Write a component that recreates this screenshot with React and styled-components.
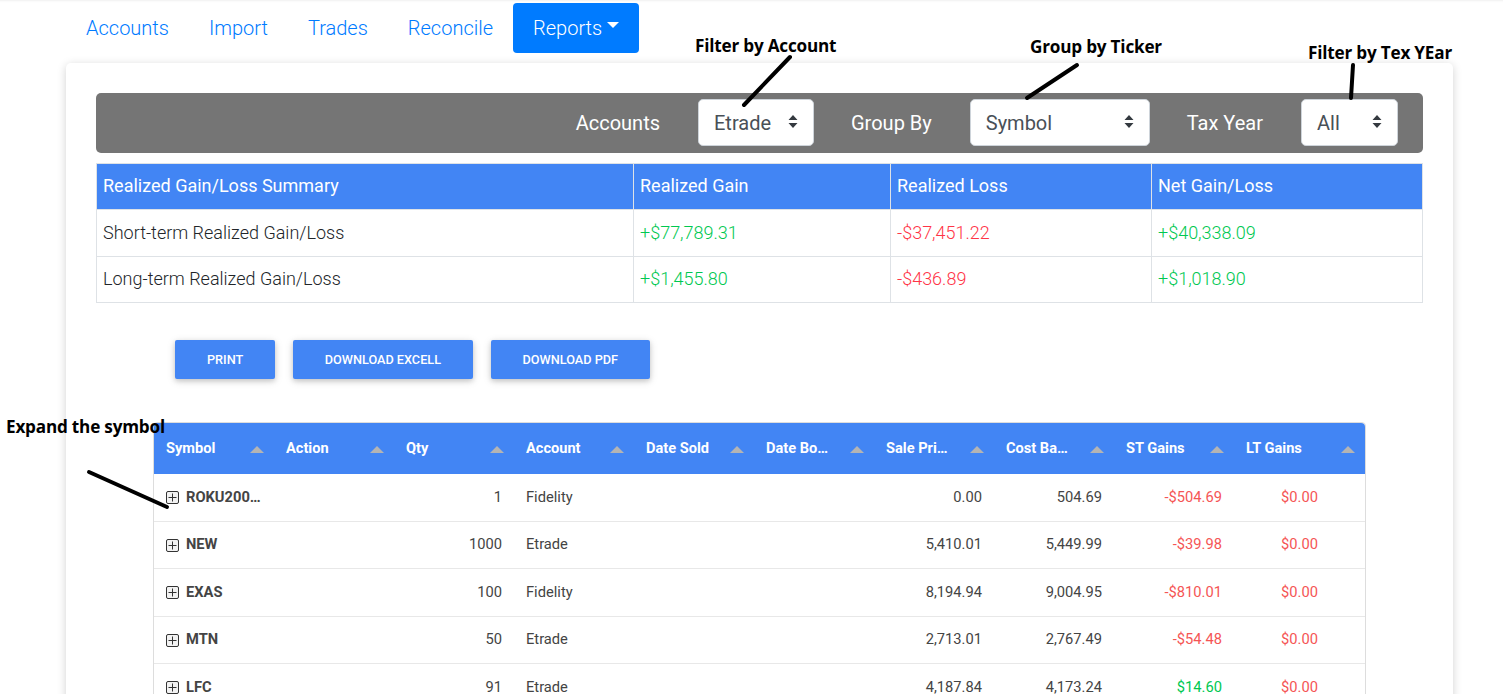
import React from "react";
import styled, { createGlobalStyle } from "styled-components";

const Global = createGlobalStyle`
  html, body { margin: 0; padding: 0; background: #fff; }
  body { font-family: Roboto, "Liberation Sans", sans-serif; color: #212529; }
`;

const Page = styled.div`
  position: relative;
  height: 694px;
  overflow: hidden;
  padding-top: 3px;
  box-sizing: border-box;
  box-shadow: inset 0 3px 3px -3px rgba(0,0,0,.12);
`;

const Nav = styled.nav`
  display: flex;
  height: 50px;
  margin-left: 66px;
`;

const NavLink = styled.a`
  display: flex;
  align-items: center;
  padding: 0 20px;
  font-size: 20px;
  font-weight: 300;
  border-radius: 4px;
  color: ${p => (p.$active ? "#fff" : "#007bff")};
  background: ${p => (p.$active ? "#007bff" : "transparent")};
`;

const Caret = styled.span`
  display: inline-block;
  margin-left: 5px;
  margin-bottom: 6px;
  border-top: 6px solid #fff;
  border-left: 6px solid transparent;
  border-right: 6px solid transparent;
`;

const Card = styled.main`
  margin: 10px 50px 0 66px;
  padding: 30px;
  min-height: 700px;
  background: #fff;
  border-radius: 5px;
  box-shadow: 0 2px 10px rgba(0,0,0,.18);
`;

const FilterBar = styled.div`
  display: flex;
  align-items: center;
  justify-content: flex-end;
  height: 60px;
  padding-right: 25px;
  background: #757575;
  border-radius: 5px;
`;

const FilterLabel = styled.label`
  margin: 0 38px 0 37px;
  font-size: 20px;
  color: #fff;
`;

const SelectWrap = styled.div`
  position: relative;
  width: ${p => p.$w}px;
  height: 47px;
  margin-bottom: 1px;
`;

const Select = styled.select`
  appearance: none;
  width: 100%;
  height: 100%;
  padding: 0 15px;
  border: 1px solid #ced4da;
  border-radius: 5px;
  background: #fff;
  font: 400 20px Roboto, sans-serif;
  color: #495057;
`;

const SelectIcon = styled.svg`
  position: absolute;
  right: 16px;
  top: 15px;
  width: 10px;
  height: 15px;
  pointer-events: none;
`;

const Summary = styled.table`
  width: 1326px;
  margin-top: 10px;
  border-collapse: collapse;
  table-layout: fixed;
  font-size: 18px;
  font-weight: 300;
`;

const SumHead = styled.th`
  height: 46px;
  padding: 0 6px 2px;
  box-sizing: border-box;
  background: #4285f4;
  border: 1px solid #dee2e6;
  color: #fff;
  font-weight: 400;
  text-align: left;
  width: ${p => p.$w}px;
`;

const SumCell = styled.td`
  height: 46.5px;
  padding: 0 6px 1px;
  box-sizing: border-box;
  border: 1px solid #dee2e6;
  color: ${p => p.$color || "#212529"};
`;

const Actions = styled.div`
  display: flex;
  gap: 17.5px;
  margin: 37px 0 0 79px;
`;

const ActionButton = styled.button`
  height: 39px;
  padding: 0 32px;
  border: 0;
  border-radius: 2px;
  background: #4285f4;
  color: #fff;
  font: 500 12.7px Roboto, sans-serif;
  text-transform: uppercase;
  box-shadow: 0 2px 5px rgba(0,0,0,.16), 0 2px 10px rgba(0,0,0,.12);
`;

const Grid = styled.section`
  width: 1213px;
  margin: 43px 0 0 57px;
  box-sizing: border-box;
  border: 1px solid #ddd;
  border-radius: 4px 4px 0 0;
`;

const GridHead = styled.div`
  display: grid;
  grid-template-columns: repeat(9, 120px) 1fr;
  height: 51px;
  background: #4285f4;
  border-radius: 4px 4px 0 0;
`;

const HeadCell = styled.div`
  display: flex;
  align-items: center;
  justify-content: space-between;
  padding: 0 10px 2px 12px;
`;

const HeadLabel = styled.span`
  width: 66px;
  overflow: hidden;
  white-space: nowrap;
  text-overflow: ellipsis;
  font-size: 14.6px;
  font-weight: 700;
  color: #fff;
`;

const SortArrow = styled.span`
  margin-top: 4px;
  border-bottom: 7px solid #b4b4b4;
  border-left: 7.5px solid transparent;
  border-right: 7.5px solid transparent;
`;

const GridRow = styled.div`
  display: grid;
  grid-template-columns: repeat(9, 120px) 1fr;
  align-items: center;
  height: 47.5px;
  padding-bottom: 1px;
  box-sizing: border-box;
  border-bottom: 1px solid #e8e8e8;
  font-size: 14.7px;
  color: #444;
`;

const SymbolCell = styled.div`
  display: flex;
  align-items: center;
  gap: 7px;
  padding-left: 12px;
  min-width: 0;
`;

const Expand = styled.svg`
  flex: none;
  width: 13px;
  height: 13px;
  margin-top: 2px;
`;

const SymbolName = styled.span`
  width: 76px;
  overflow: hidden;
  white-space: nowrap;
  text-overflow: ellipsis;
  font-weight: 700;
  color: #444;
`;

const Cell = styled.div`
  padding: 0 12px;
  text-align: ${p => (p.$right ? "right" : "left")};
  color: ${p => p.$color || "inherit"};
  ${p => p.$last && "padding-right: 47px;"}
`;

const Note = styled.div`
  position: absolute;
  left: ${p => p.$x}px;
  top: ${p => p.$y}px;
  font-family: "Open Sans", sans-serif;
  font-size: 17.15px;
  font-weight: 700;
  color: #000;
  white-space: nowrap;
  letter-spacing: -0.2px;
`;

const Strokes = styled.svg`
  position: absolute;
  left: 0;
  top: 0;
  width: 1503px;
  height: 694px;
  pointer-events: none;
`;

const RED = "#ff3547";
const GREEN = "#00c851";
const GRID_RED = "#f55555";
const GRID_GREEN = "#00c851";

const heads = ["Symbol", "Action", "Qty", "Account", "Date Sold", "Date Bought", "Sale Price", "Cost Basis", "ST Gains", "LT Gains"];

const rows = [
  ["ROKU200117C00120000", "1", "Fidelity", "0.00", "504.69", "-$504.69", GRID_RED],
  ["NEW", "1000", "Etrade", "5,410.01", "5,449.99", "-$39.98", GRID_RED],
  ["EXAS", "100", "Fidelity", "8,194.94", "9,004.95", "-$810.01", GRID_RED],
  ["MTN", "50", "Etrade", "2,713.01", "2,767.49", "-$54.48", GRID_RED],
  ["LFC", "91", "Etrade", "4,187.84", "4,173.24", "$14.60", GRID_GREEN],
];

const summary = [
  ["Short-term Realized Gain/Loss", "+$77,789.31", "-$37,451.22", "+$40,338.09"],
  ["Long-term Realized Gain/Loss", "+$1,455.80", "-$436.89", "+$1,018.90"],
];

const FilterSelect = ({ w, value, options }) => (
  <SelectWrap $w={w}>
    <Select defaultValue={value}>
      {options.map(o => <option key={o}>{o}</option>)}
    </Select>
    <SelectIcon viewBox="0 0 10 15">
      <path d="M5 1 9.5 6H.5zM5 14 .5 9h9z" fill="#343a40" />
    </SelectIcon>
  </SelectWrap>
);

export default function App() {
  return (
    <Page>
      <Global />
      <Nav>
        <NavLink>Accounts</NavLink>
        <NavLink>Import</NavLink>
        <NavLink>Trades</NavLink>
        <NavLink>Reconcile</NavLink>
        <NavLink $active>Reports<Caret /></NavLink>
      </Nav>
      <Card>
        <FilterBar>
          <FilterLabel>Accounts</FilterLabel>
          <FilterSelect w={116} value="Etrade" options={["Etrade", "Fidelity"]} />
          <FilterLabel>Group By</FilterLabel>
          <FilterSelect w={180} value="Symbol" options={["Symbol", "Account"]} />
          <FilterLabel>Tax Year</FilterLabel>
          <FilterSelect w={97} value="All" options={["All", "2019"]} />
        </FilterBar>
        <Summary>
          <thead>
            <tr>
              <SumHead $w={537}>Realized Gain/Loss Summary</SumHead>
              <SumHead $w={257}>Realized Gain</SumHead>
              <SumHead $w={261}>Realized Loss</SumHead>
              <SumHead $w={271}>Net Gain/Loss</SumHead>
            </tr>
          </thead>
          <tbody>
            {summary.map(r => (
              <tr key={r[0]}>
                <SumCell>{r[0]}</SumCell>
                <SumCell $color={GREEN}>{r[1]}</SumCell>
                <SumCell $color={RED}>{r[2]}</SumCell>
                <SumCell $color={GREEN}>{r[3]}</SumCell>
              </tr>
            ))}
          </tbody>
        </Summary>
        <Actions>
          <ActionButton>Print</ActionButton>
          <ActionButton>Download Excell</ActionButton>
          <ActionButton>Download PDF</ActionButton>
        </Actions>
        <Grid>
          <GridHead>
            {heads.map(h => (
              <HeadCell key={h}>
                <HeadLabel>{h}</HeadLabel>
                <SortArrow />
              </HeadCell>
            ))}
          </GridHead>
          {rows.map(r => (
            <GridRow key={r[0]}>
              <SymbolCell>
                <Expand viewBox="0 0 13 13">
                  <rect x=".5" y=".5" width="12" height="12" rx="1.5" fill="#f2f2f2" stroke="#333" />
                  <path d="M6.5 2.5v8M2.5 6.5h8" stroke="#333" fill="none" />
                </Expand>
                <SymbolName>{r[0]}</SymbolName>
              </SymbolCell>
              <Cell />
              <Cell $right>{r[1]}</Cell>
              <Cell>{r[2]}</Cell>
              <Cell />
              <Cell />
              <Cell $right>{r[3]}</Cell>
              <Cell $right>{r[4]}</Cell>
              <Cell $right $color={r[6]}>{r[5]}</Cell>
              <Cell $right $last $color={GRID_RED}>$0.00</Cell>
            </GridRow>
          ))}
        </Grid>
      </Card>
      <Note $x={695} $y={34}>Filter by Account</Note>
      <Note $x={1030} $y={35}>Group by Ticker</Note>
      <Note $x={1308} $y={41}>Filter by Tex YEar</Note>
      <Note $x={6} $y={415}>Expand the symbol</Note>
      <Strokes viewBox="0 0 1503 694">
        <g stroke="#000" strokeWidth="4" strokeLinecap="round" fill="none">
          <path d="M790 57 744 105" />
          <path d="M1077 65 1027 98" />
          <path d="M1353 65 1351 98" />
          <path d="M89 472 167 507" />
        </g>
      </Strokes>
    </Page>
  );
}
